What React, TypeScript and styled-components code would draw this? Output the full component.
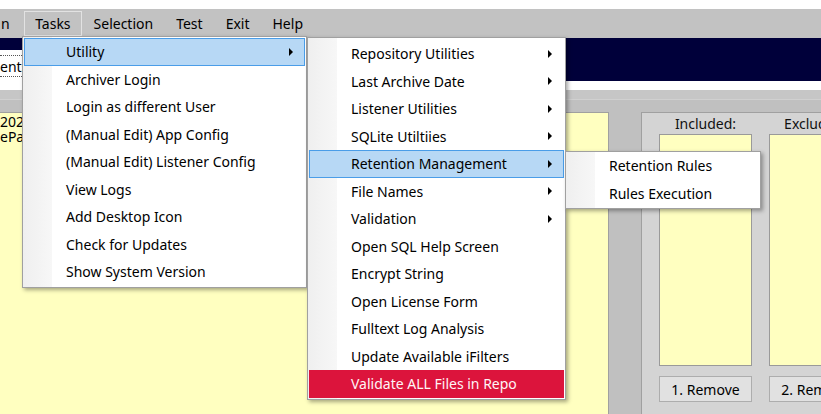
import React from 'react';
import styled, { createGlobalStyle } from 'styled-components';

const Global = createGlobalStyle`
  html, body { margin: 0; padding: 0; background: #ffffff; overflow: hidden; }
  body { font-family: 'Noto Sans', 'Open Sans', sans-serif; color: #000; }
  #root { width: 821px; height: 414px; }
`;

const Window = styled.div`
  position: relative;
  width: 821px;
  height: 414px;
  overflow: hidden;
  display: flex;
  flex-direction: column;
  background: #ffffff;
`;

const TopGap = styled.div`
  flex: none;
  height: 9px;
  background: #ffffff;
`;

const MenuBar = styled.div`
  flex: none;
  height: 29px;
  background: #c2c2c2;
  display: flex;
  align-items: center;
  font-size: 14px;
  white-space: nowrap;
`;

const BarItem = styled.div<{ $open?: boolean; $first?: boolean }>`
  height: 25px;
  box-sizing: border-box;
  display: flex;
  align-items: center;
  padding: ${(p) => (p.$first ? '0 13px 0 0' : '0 10.5px')};
  border: 1px solid ${(p) => (p.$open ? '#e2e2e2' : 'transparent')};
`;

const Banner = styled.div`
  flex: none;
  height: 43px;
  background: #00003a;
  display: flex;
  align-items: flex-end;
`;

const PathBox = styled.div`
  width: 260px;
  height: 31px;
  box-sizing: border-box;
  background: #ffffff;
  padding: 5px 0 4px 0;
  font-size: 14px;
`;

const PathFocus = styled.div`
  height: 100%;
  box-sizing: border-box;
  border-top: 1px dotted #555;
  border-bottom: 1px dotted #555;
  display: flex;
  align-items: center;
`;

const WhiteStrip = styled.div`
  flex: none;
  height: 9px;
  background: #ffffff;
`;

const GrayStrip = styled.div`
  flex: none;
  height: 9px;
  background: #c6c6c6;
  border-bottom: 1px solid #d0d0d0;
`;

const Main = styled.div`
  flex: 1;
  min-height: 0;
  background: #c0c0c0;
  padding-top: 12px;
  display: flex;
  align-items: stretch;
`;

const YellowPanel = styled.div`
  flex: none;
  width: 609px;
  box-sizing: border-box;
  background: #ffffc0;
  border-top: 1px solid #a0a0a0;
  border-right: 1px solid #a0a0a0;
  padding-top: 1px;
  font-size: 14px;
  line-height: 15px;
`;

const Group = styled.div`
  flex: none;
  width: 220px;
  margin-left: 32px;
  box-sizing: border-box;
  background: #d4d4d4;
  border-top: 1px solid #a0a0a0;
  border-left: 1px solid #a0a0a0;
  padding-left: 17px;
  display: flex;
  gap: 17px;
`;

const Column = styled.div`
  flex: none;
  width: 93px;
  display: flex;
  flex-direction: column;
  align-items: center;
`;

const ColLabel = styled.div`
  height: 21px;
  display: flex;
  align-items: center;
  font-size: 14px;
  white-space: nowrap;
  color: #111;
`;

const ListBox = styled.div`
  width: 93px;
  height: 232px;
  box-sizing: border-box;
  background: #ffffc0;
  border: 1px solid #9a9a9a;
`;

const Button = styled.div`
  margin-top: 10px;
  width: 93px;
  height: 26px;
  box-sizing: border-box;
  background: #e1e1e1;
  border: 1px solid #adadad;
  display: flex;
  align-items: center;
  justify-content: center;
  font-size: 14px;
  white-space: nowrap;
  overflow: hidden;
`;

const Menu = styled.div<{ $left: number; $top: number; $width: number; $padTop: number }>`
  position: absolute;
  left: ${(p) => p.$left}px;
  top: ${(p) => p.$top}px;
  width: ${(p) => p.$width}px;
  box-sizing: border-box;
  border: 1px solid #a0a0a0;
  padding: ${(p) => p.$padTop}px 1px 1px 1px;
  background: linear-gradient(to right, #efefef 0px, #f7f7f7 29px, #ffffff 29px);
  box-shadow: 2px 2px 4px rgba(0, 0, 0, 0.35);
  display: flex;
  flex-direction: column;
  font-size: 14px;
  white-space: nowrap;
`;

const Item = styled.div<{ $state?: 'hover' | 'danger' }>`
  height: 27.5px;
  box-sizing: border-box;
  display: flex;
  align-items: center;
  padding: 0 11px 0 41px;
  border: 1px solid
    ${(p) => (p.$state === 'hover' ? '#4a9de8' : p.$state === 'danger' ? '#dc143c' : 'transparent')};
  background: ${(p) => (p.$state === 'hover' ? '#b7d8f5' : p.$state === 'danger' ? '#dc143c' : 'transparent')};
  color: ${(p) => (p.$state === 'danger' ? '#fff4f6' : '#000')};
`;

const Label = styled.span`
  flex: 1;
`;

const Arrow = styled.span`
  flex: none;
  width: 0;
  height: 0;
  border-top: 4px solid transparent;
  border-bottom: 4px solid transparent;
  border-left: 4px solid #000;
`;

type Entry = { label: string; sub?: boolean; state?: 'hover' | 'danger' };

const tasks: Entry[] = [
  { label: 'Utility', sub: true, state: 'hover' },
  { label: 'Archiver Login' },
  { label: 'Login as different User' },
  { label: '(Manual Edit) App Config' },
  { label: '(Manual Edit) Listener Config' },
  { label: 'View Logs' },
  { label: 'Add Desktop Icon' },
  { label: 'Check for Updates' },
  { label: 'Show System Version' },
];

const utility: Entry[] = [
  { label: 'Repository Utilities', sub: true },
  { label: 'Last Archive Date', sub: true },
  { label: 'Listener Utilities', sub: true },
  { label: 'SQLite Utiltiies', sub: true },
  { label: 'Retention Management', sub: true, state: 'hover' },
  { label: 'File Names', sub: true },
  { label: 'Validation', sub: true },
  { label: 'Open SQL Help Screen' },
  { label: 'Encrypt String' },
  { label: 'Open License Form' },
  { label: 'Fulltext Log Analysis' },
  { label: 'Update Available iFilters' },
  { label: 'Validate ALL Files in Repo', state: 'danger' },
];

const retention: Entry[] = [{ label: 'Retention Rules' }, { label: 'Rules Execution' }];

const MenuList = ({ items }: { items: Entry[] }) => (
  <>
    {items.map((e) => (
      <Item key={e.label} $state={e.state}>
        <Label>{e.label}</Label>
        {e.sub && <Arrow />}
      </Item>
    ))}
  </>
);

export default function App() {
  return (
    <Window>
      <Global />
      <TopGap />
      <MenuBar>
        <BarItem $first>n</BarItem>
        <BarItem $open>Tasks</BarItem>
        <BarItem>Selection</BarItem>
        <BarItem>Test</BarItem>
        <BarItem>Exit</BarItem>
        <BarItem>Help</BarItem>
      </MenuBar>
      <Banner>
        <PathBox>
          <PathFocus>ents</PathFocus>
        </PathBox>
      </Banner>
      <WhiteStrip />
      <GrayStrip />
      <Main>
        <YellowPanel>
          <div>2023</div>
          <div>ePa</div>
        </YellowPanel>
        <Group>
          <Column>
            <ColLabel>Included:</ColLabel>
            <ListBox />
            <Button>1. Remove</Button>
          </Column>
          <Column>
            <ColLabel>Excluded:</ColLabel>
            <ListBox />
            <Button>2. Remove</Button>
          </Column>
        </Group>
      </Main>

      <Menu $left={22} $top={36} $width={285} $padTop={1}>
        <MenuList items={tasks} />
      </Menu>
      <Menu $left={307} $top={37} $width={259} $padTop={2}>
        <MenuList items={utility} />
      </Menu>
      <Menu $left={565} $top={151} $width={196} $padTop={0}>
        <MenuList items={retention} />
      </Menu>
    </Window>
  );
}
